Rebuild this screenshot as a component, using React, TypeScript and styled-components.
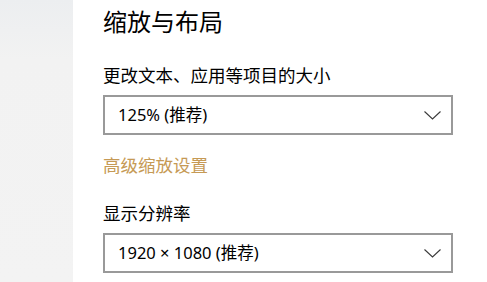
import React from "react";
import styled, { createGlobalStyle } from "styled-components";

const Global = createGlobalStyle`
  html, body { margin: 0; padding: 0; background: #ffffff; }
  body { width: 487px; height: 282px; overflow: hidden; }
  #root { height: 100%; }
`;

const FONT = `"Noto Sans", "Noto Sans CJK SC", sans-serif`;

const Page = styled.div`
  display: flex;
  width: 487px;
  height: 282px;
  font-family: ${FONT};
  color: #000;
`;

const Sidebar = styled.div`
  width: 73px;
  flex: none;
  background: linear-gradient(180deg, #eceef0 0px, #f2f2f2 60px, #f3f3f3 100%);
`;

const Content = styled.div`
  flex: 1;
  display: flex;
  flex-direction: column;
  padding: 6px 0 0 30px;
`;

const Title = styled.h1`
  margin: 0;
  font-family: ${FONT};
  font-weight: 400;
  font-size: 24px;
  line-height: 32px;
  height: 32px;
  letter-spacing: 0;
`;

const Label = styled.div<{ $gap: number }>`
  margin-top: ${(p) => p.$gap}px;
  font-size: 17.5px;
  line-height: 24px;
  height: 24px;
`;

const Link = styled.a`
  margin-top: 17.5px;
  font-size: 17.5px;
  line-height: 24px;
  height: 24px;
  color: #c69a55;
  text-decoration: none;
  cursor: pointer;
  width: max-content;
`;

const Select = styled.div`
  margin-top: 8px;
  box-sizing: border-box;
  width: 350px;
  height: 40px;
  border: 2px solid #999999;
  background: #fff;
  display: flex;
  align-items: center;
  justify-content: space-between;
  padding: 0 10px 0 13px;
`;

const SelectText = styled.span`
  font-size: 16.5px;
  line-height: 24px;
  color: #000;
`;

const Chevron = () => (
  <svg width="17" height="9" viewBox="0 0 17 9" fill="none">
    <polyline points="0.5,0.5 8.5,8 16.5,0.5" stroke="#3a3a3a" strokeWidth="1.1" />
  </svg>
);

export default function App() {
  return (
    <>
      <Global />
      <Page>
        <Sidebar />
        <Content>
          <Title>缩放与布局</Title>
          <Label $gap={25}>更改文本、应用等项目的大小</Label>
          <Select>
            <SelectText>125% (推荐)</SelectText>
            <Chevron />
          </Select>
          <Link>高级缩放设置</Link>
          <Label $gap={24.5}>显示分辨率</Label>
          <Select>
            <SelectText>1920 × 1080 (推荐)</SelectText>
            <Chevron />
          </Select>
        </Content>
      </Page>
    </>
  );
}
